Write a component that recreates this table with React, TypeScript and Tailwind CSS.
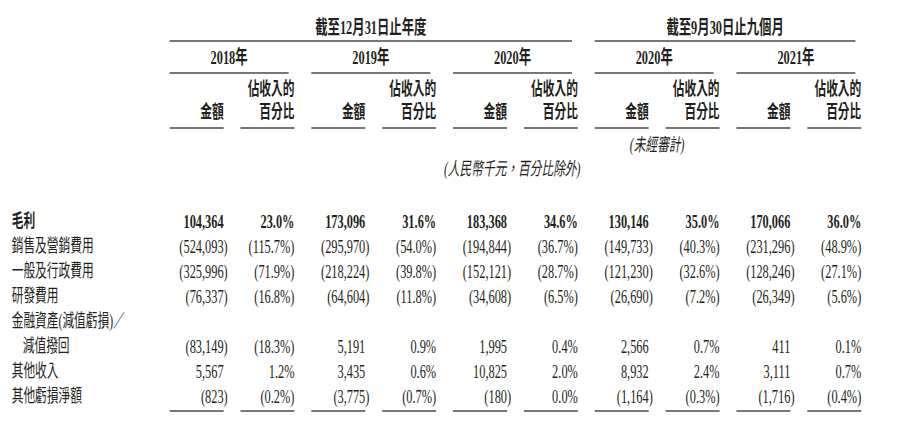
import React from 'react';

type Row = { label: string; bold?: boolean; indent?: boolean; values: string[] };

const rows: Row[] = [
  {
    label: '毛利',
    bold: true,
    values: ['104,364', '23.0%', '173,096', '31.6%', '183,368', '34.6%', '130,146', '35.0%', '170,066', '36.0%'],
  },
  {
    label: '銷售及營銷費用',
    values: ['(524,093)', '(115.7%)', '(295,970)', '(54.0%)', '(194,844)', '(36.7%)', '(149,733)', '(40.3%)', '(231,296)', '(48.9%)'],
  },
  {
    label: '一般及行政費用',
    values: ['(325,996)', '(71.9%)', '(218,224)', '(39.8%)', '(152,121)', '(28.7%)', '(121,230)', '(32.6%)', '(128,246)', '(27.1%)'],
  },
  {
    label: '研發費用',
    values: ['(76,337)', '(16.8%)', '(64,604)', '(11.8%)', '(34,608)', '(6.5%)', '(26,690)', '(7.2%)', '(26,349)', '(5.6%)'],
  },
  { label: '金融資產(減值虧損)／', values: [] },
  {
    label: '減值撥回',
    indent: true,
    values: ['(83,149)', '(18.3%)', '5,191', '0.9%', '1,995', '0.4%', '2,566', '0.7%', '411', '0.1%'],
  },
  {
    label: '其他收入',
    values: ['5,567', '1.2%', '3,435', '0.6%', '10,825', '2.0%', '8,932', '2.4%', '3,111', '0.7%'],
  },
  {
    label: '其他虧損淨額',
    values: ['(823)', '(0.2%)', '(3,775)', '(0.7%)', '(180)', '0.0%', '(1,164)', '(0.3%)', '(1,716)', '(0.4%)'],
  },
];

const years = ['2018年', '2019年', '2020年', '2020年', '2021年'];
const cols = Array.from({ length: 10 }, (_, i) => i);

export default function App() {
  return (
    <div className="h-[426px] w-[907px] overflow-hidden bg-white text-[#231f20]">
      {/* the source page is set in a condensed face, so the table is laid out wide and squeezed */}
      <div className="w-[1395px] origin-top-left scale-x-[0.65] font-['Liberation_Serif','Noto_Sans_CJK_TC',serif] text-[19px]">
        <div className="grid grid-cols-[235px_repeat(10,83px)] gap-x-[26px]">
          {/* period headings */}
          <div />
          <div className="col-span-6 pr-[9px]">
            <div className="border-b-2 border-[#777] pt-[16px] text-center font-bold leading-[24px]">
              截至12月31日止年度
            </div>
          </div>
          <div className="col-span-4 pr-[9px]">
            <div className="border-b-2 border-[#777] pt-[16px] text-center font-bold leading-[24px]">
              截至9月30日止九個月
            </div>
          </div>

          {/* years */}
          <div />
          {years.map((y, i) => (
            <div key={i} className="col-span-2 pr-[9px]">
              <div className="border-b-2 border-[#777] pb-[2px] pt-[4px] text-center font-bold leading-[24px]">
                {y}
              </div>
            </div>
          ))}

          {/* column headings */}
          <div />
          {cols.map((c) => (
            <div
              key={c}
              className="flex flex-col justify-end border-b-2 border-[#777] pb-[3px] pt-[4px] text-right text-[18px] font-bold leading-[23px]"
            >
              {c % 2 === 0 ? (
                <span>金額</span>
              ) : (
                <>
                  <span>佔收入的</span>
                  <span>百分比</span>
                </>
              )}
            </div>
          ))}

          {/* notes */}
          <div className="col-start-8 col-span-2 whitespace-nowrap pt-[4px] text-center text-[18px] italic leading-[24px]">
            (未經審計)
          </div>
          <div className="col-start-6 col-span-2 flex justify-center whitespace-nowrap pr-[10px] text-[18px] italic leading-[24px]">
            <span>(人民幣千元，百分比除外)</span>
          </div>
          <div className="col-span-11 h-[28px]" />

          {/* body */}
          {rows.map((r) => (
            <React.Fragment key={r.label}>
              <div
                className={`whitespace-nowrap text-[18px] leading-[25px] ${r.bold ? 'font-bold' : ''} ${
                  r.indent ? 'pl-[35px]' : 'pl-[18px]'
                }`}
              >
                {r.label}
              </div>
              {cols.map((c) => {
                const v = r.values[c] ?? '';
                const hang = c % 2 === 0 && v.startsWith('(');
                return (
                  <div key={c} className={`text-right leading-[25px] ${r.bold ? 'font-bold' : ''}`}>
                    <span className={hang ? '-mr-[0.333em]' : ''}>{v}</span>
                  </div>
                );
              })}
            </React.Fragment>
          ))}

          {/* closing rules */}
          <div />
          {cols.map((c) => (
            <div key={c} className="mt-[1px] h-[2px] bg-[#777]" />
          ))}
        </div>
      </div>
    </div>
  );
}
